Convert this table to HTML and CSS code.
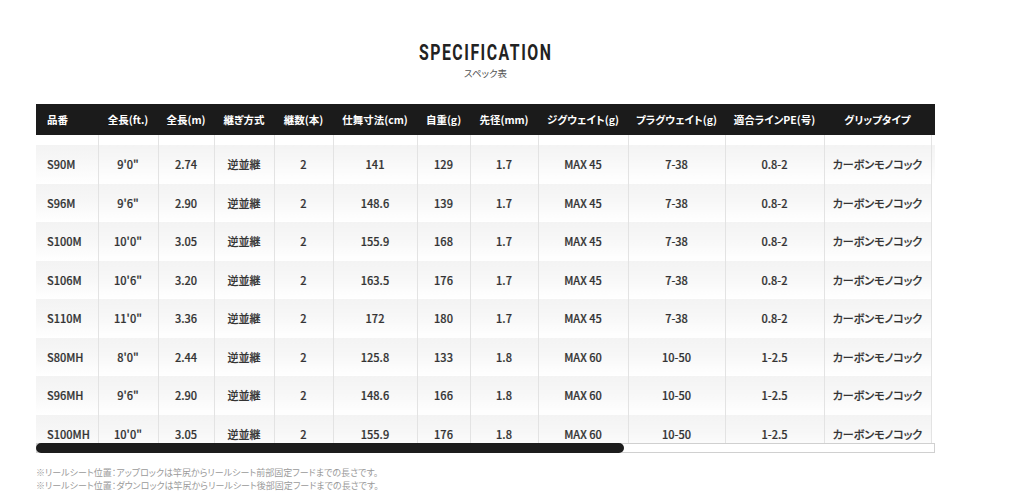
FILE: index.html
```html
<!DOCTYPE html>
<html lang="ja">
<head>
<meta charset="utf-8">
<title>SPECIFICATION</title>
<link rel="stylesheet" href="styles.css">
</head>
<body>
<section class="spec">
  <header class="spec-head">
    <h2 class="spec-title"><span class="spec-title-text">SPECIFICATION</span></h2>
    <p class="spec-sub">スペック表</p>
  </header>
  <div class="table-wrap">
    <table class="spec-table">
      <thead>
        <tr>
          <th class="c1">品番</th>
          <th class="c2">全長(ft.)</th>
          <th class="c3">全長(m)</th>
          <th class="c4">継ぎ方式</th>
          <th class="c5">継数(本)</th>
          <th class="c6">仕舞寸法(cm)</th>
          <th class="c7">自重(g)</th>
          <th class="c8">先径(mm)</th>
          <th class="c9">ジグウェイト(g)</th>
          <th class="c10">プラグウェイト(g)</th>
          <th class="c11">適合ラインPE(号)</th>
          <th class="c12">グリップタイプ</th>
          <th class="c13"></th>
        </tr>
      </thead>
      <tbody>
        <tr><td>S90M</td><td>9'0"</td><td>2.74</td><td>逆並継</td><td>2</td><td>141</td><td>129</td><td>1.7</td><td>MAX 45</td><td>7-38</td><td>0.8-2</td><td>カーボンモノコック</td><td></td></tr>
        <tr><td>S96M</td><td>9'6"</td><td>2.90</td><td>逆並継</td><td>2</td><td>148.6</td><td>139</td><td>1.7</td><td>MAX 45</td><td>7-38</td><td>0.8-2</td><td>カーボンモノコック</td><td></td></tr>
        <tr><td>S100M</td><td>10'0"</td><td>3.05</td><td>逆並継</td><td>2</td><td>155.9</td><td>168</td><td>1.7</td><td>MAX 45</td><td>7-38</td><td>0.8-2</td><td>カーボンモノコック</td><td></td></tr>
        <tr><td>S106M</td><td>10'6"</td><td>3.20</td><td>逆並継</td><td>2</td><td>163.5</td><td>176</td><td>1.7</td><td>MAX 45</td><td>7-38</td><td>0.8-2</td><td>カーボンモノコック</td><td></td></tr>
        <tr><td>S110M</td><td>11'0"</td><td>3.36</td><td>逆並継</td><td>2</td><td>172</td><td>180</td><td>1.7</td><td>MAX 45</td><td>7-38</td><td>0.8-2</td><td>カーボンモノコック</td><td></td></tr>
        <tr><td>S80MH</td><td>8'0"</td><td>2.44</td><td>逆並継</td><td>2</td><td>125.8</td><td>133</td><td>1.8</td><td>MAX 60</td><td>10-50</td><td>1-2.5</td><td>カーボンモノコック</td><td></td></tr>
        <tr><td>S96MH</td><td>9'6"</td><td>2.90</td><td>逆並継</td><td>2</td><td>148.6</td><td>166</td><td>1.8</td><td>MAX 60</td><td>10-50</td><td>1-2.5</td><td>カーボンモノコック</td><td></td></tr>
        <tr><td>S100MH</td><td>10'0"</td><td>3.05</td><td>逆並継</td><td>2</td><td>155.9</td><td>176</td><td>1.8</td><td>MAX 60</td><td>10-50</td><td>1-2.5</td><td>カーボンモノコック</td><td></td></tr>
      </tbody>
    </table>
  </div>
  <div class="scrollbar"><div class="scrollbar-thumb"></div></div>
  <div class="notes">
    <p>※リールシート位置：アップロックは竿尻からリールシート前部固定フードまでの長さです。</p>
    <p>※リールシート位置：ダウンロックは竿尻からリールシート後部固定フードまでの長さです。</p>
  </div>
</section>
</body>
</html>
```

FILE: styles.css
```css
* { box-sizing: border-box; }

html, body {
  margin: 0;
  padding: 0;
  background: #fff;
}

body {
  font-family: "Noto Sans CJK JP", "Noto Sans", sans-serif;
  font-feature-settings: "palt";
  color: #333;
}

.spec {
  padding: 40px 0 0 36px;
  width: 935px;
}

.spec-head {
  text-align: center;
}

.spec-title {
  margin: 0;
  font-family: Roboto, "DejaVu Sans", sans-serif;
  font-weight: 700;
  font-size: 22px;
  line-height: 26px;
  color: #222;
}

.spec-title-text {
  display: inline-block;
  letter-spacing: 2.1px;
  transform: scaleX(0.72);
}

.spec-sub {
  margin: 0;
  font-size: 9.5px;
  line-height: 14px;
  color: #555;
}

.table-wrap {
  margin-top: 24px;
  width: 899px;
  height: 339px;
  overflow: hidden;
}

.scrollbar {
  width: 899px;
  height: 10px;
  border: 1px solid #d0d0d0;
  background: #fff;
}

.scrollbar-thumb {
  width: 588px;
  height: 10px;
  margin: -1px 0 0 -1px;
  background: #1c1c1c;
  border-radius: 5px;
}

.spec-table {
  border-collapse: collapse;
  table-layout: fixed;
  width: 1374px;
}

.spec-table th {
  background: #1b1b1b;
  color: #fff;
  font-weight: 700;
  font-size: 10.5px;
  height: 31px;
  padding: 0;
  text-align: center;
  white-space: nowrap;
}

.spec-table th.c1 { text-align: left; padding-left: 11px; }

.c1 { width: 62px; }
.c2 { width: 60px; }
.c3 { width: 56px; }
.c4 { width: 60px; }
.c5 { width: 59px; }
.c6 { width: 84px; }
.c7 { width: 53px; }
.c8 { width: 68px; }
.c9 { width: 90px; }
.c10 { width: 97px; }
.c11 { width: 99px; }
.c12 { width: 107px; }
.c13 { width: 479px; }

.spec-table td {
  height: 38.5px;
  padding: 0;
  font-size: 11px;
  font-weight: 500;
  -webkit-text-stroke: 0.2px #333;
  color: #333;
  text-align: center;
  white-space: nowrap;
  border-left: 1px solid #e3e3e3;
  background: linear-gradient(to bottom, #f3f3f3 0%, #f7f7f7 45%, #fff 100%);
}

.spec-table td:first-child {
  border-left: 0;
  text-align: left;
  padding-left: 11px;
}

.spec-table tbody tr:first-child td {
  height: 48.5px;
  padding-top: 10px;
  background: linear-gradient(to bottom, #fff 0, #fff 10px, #f3f3f3 10px, #f7f7f7 50%, #fff 100%);
}

.spec-table tbody tr:first-child td:first-child {
  padding-left: 11px;
}

.spec-table td:last-child {
  background: #fff;
}

.notes {
  margin-top: 13px;
}

.notes p {
  margin: 0;
  font-size: 9px;
  line-height: 13px;
  color: #9a9a9a;
}
```
